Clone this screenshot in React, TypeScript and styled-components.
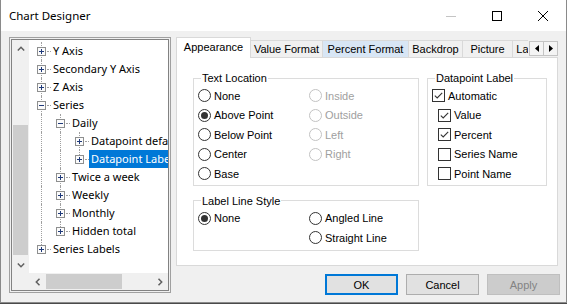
import React from "react";
import styled, { createGlobalStyle, css } from "styled-components";

const GlobalStyle = createGlobalStyle`
  html, body { margin: 0; padding: 0; background: #4a4a4a; }
  body { width: 567px; height: 304px; overflow: hidden; }
  * { box-sizing: border-box; }
`;

const Window = styled.div`
  width: 567px;
  height: 303px;
  display: flex;
  flex-direction: column;
  background: #f0f0f0;
  border: 1px solid #8a8a8a;
  border-top: none;
  font-family: "Liberation Sans", Arial, sans-serif;
  font-size: 11px;
  color: #000;
`;

const TitleBar = styled.div`
  height: 31px;
  flex: none;
  display: flex;
  background: #fff;
`;

const TitleText = styled.div`
  flex: 1;
  display: flex;
  align-items: center;
  padding-left: 8px;
  font-family: "Noto Sans", sans-serif;
  font-size: 11.5px;
`;

const CaptionButton = styled.div`
  width: 46px;
  display: flex;
  align-items: center;
  justify-content: center;
`;

const Body = styled.div`
  display: flex;
  gap: 5px;
  padding: 6px 0 0 8px;
`;

/* ---------- Tree ---------- */
const TreeFrame = styled.div`
  width: 162px;
  height: 256px;
  flex: none;
  border: 1px solid #a0a0a0;
  padding: 1px;
  background: #f0f0f0;
`;

const TreeInner = styled.div`
  height: 100%;
  border: 1px solid #828282;
  display: grid;
  grid-template-columns: 17px 1fr;
  grid-template-rows: 1fr 17px;
  background: #f0f0f0;
  min-height: 0;
`;

const VScroll = styled.div`
  display: flex;
  flex-direction: column;
  background: #f0f0f0;
  min-height: 0;
`;

const HScroll = styled.div`
  display: flex;
  background: #f0f0f0;
  min-width: 0;
`;

const ScrollArrow = styled.div`
  width: 17px;
  height: 17px;
  flex: none;
  display: flex;
  align-items: center;
  justify-content: center;
`;

const VTrack = styled.div<{ $offset: number }>`
  flex: 1;
  padding-top: ${(p) => p.$offset}px;
`;

const VThumb = styled.div<{ $size: number }>`
  height: ${(p) => p.$size}px;
  margin: 0 1px;
  background: #cdcdcd;
`;

const HTrack = styled.div<{ $offset: number }>`
  flex: 1;
  padding-left: ${(p) => p.$offset}px;
  display: flex;
`;

const HThumb = styled.div<{ $size: number }>`
  width: ${(p) => p.$size}px;
  margin: 1px 0;
  background: #cdcdcd;
`;

const Corner = styled.div`
  background: #f0f0f0;
`;

const TreeContent = styled.div`
  background: #fff;
  overflow: hidden;
  padding: 2px 0 0 3px;
  font-family: "Noto Sans", sans-serif;
  font-size: 11px;
`;

const TreeRowEl = styled.div`
  display: flex;
  height: 18px;
  white-space: nowrap;
`;

const Guide = styled.div<{ $on: boolean }>`
  width: 19px;
  flex: none;
  position: relative;
  ${(p) =>
    p.$on &&
    css`
      &::before {
        content: "";
        position: absolute;
        left: 9px;
        top: 0;
        bottom: 0;
        border-left: 1px dotted #a0a0a0;
      }
    `}
`;

const Connector = styled.div<{ $last: boolean }>`
  width: 19px;
  flex: none;
  position: relative;
  &::before {
    content: "";
    position: absolute;
    left: 9px;
    top: 0;
    height: ${(p) => (p.$last ? "9px" : "100%")};
    border-left: 1px dotted #a0a0a0;
  }
  &::after {
    content: "";
    position: absolute;
    left: 15px;
    right: 0;
    top: 9px;
    border-top: 1px dotted #a0a0a0;
  }
`;

const ExpanderIcon = styled.svg`
  position: absolute;
  left: 5px;
  top: 5px;
  z-index: 1;
`;

const NodeLabel = styled.span<{ $selected?: boolean }>`
  flex: none;
  padding: 0 2px;
  height: 18px;
  line-height: 18px;
  background: ${(p) => (p.$selected ? "#0078d7" : "transparent")};
  color: ${(p) => (p.$selected ? "#fff" : "#000")};
`;

type Node = {
  label: string;
  guides: boolean[];
  expanded?: boolean;
  last?: boolean;
  selected?: boolean;
};

const nodes: Node[] = [
  { label: "Y Axis", guides: [] },
  { label: "Secondary Y Axis", guides: [] },
  { label: "Z Axis", guides: [] },
  { label: "Series", guides: [], expanded: true },
  { label: "Daily", guides: [true], expanded: true },
  { label: "Datapoint defaults", guides: [true, true] },
  { label: "Datapoint Labels", guides: [true, true], last: true, selected: true },
  { label: "Twice a week", guides: [true] },
  { label: "Weekly", guides: [true] },
  { label: "Monthly", guides: [true] },
  { label: "Hidden total", guides: [true], last: true },
  { label: "Series Labels", guides: [], last: true },
];

const Expander = ({ expanded }: { expanded?: boolean }) => (
  <ExpanderIcon width="9" height="9" viewBox="0 0 9 9">
    <rect x="0.5" y="0.5" width="8" height="8" fill="#fbfbfb" stroke="#8e8f8f" />
    <line x1="2" y1="4.5" x2="7" y2="4.5" stroke="#1f3a7a" />
    {!expanded && <line x1="4.5" y1="2" x2="4.5" y2="7" stroke="#1f3a7a" />}
  </ExpanderIcon>
);

const TreeRow = ({ node }: { node: Node }) => (
  <TreeRowEl>
    {node.guides.map((g, i) => (
      <Guide key={i} $on={g} />
    ))}
    <Connector $last={!!node.last}>
      <Expander expanded={node.expanded} />
    </Connector>
    <NodeLabel $selected={node.selected}>{node.label}</NodeLabel>
  </TreeRowEl>
);

const Chevron = ({ dir }: { dir: "up" | "down" | "left" | "right" }) => {
  const pts = {
    up: "0.8,4.5 4,1.3 7.2,4.5",
    down: "0.8,1.5 4,4.7 7.2,1.5",
    left: "4.5,0.8 1.3,4 4.5,7.2",
    right: "1.5,0.8 4.7,4 1.5,7.2",
  }[dir];
  const horiz = dir === "up" || dir === "down";
  return (
    <svg width={horiz ? 8 : 6} height={horiz ? 6 : 8} viewBox={horiz ? "0 0 8 6" : "0 0 6 8"}>
      <polyline points={pts} fill="none" stroke="#606060" strokeWidth="1.5" />
    </svg>
  );
};

/* ---------- Tabs ---------- */
const RightColumn = styled.div`
  width: 384px;
  display: flex;
  flex-direction: column;
`;

const TabStrip = styled.div`
  width: 382px;
  height: 20px;
  display: flex;
  position: relative;
  z-index: 1;
`;

const TabViewport = styled.div`
  width: 352px;
  height: 21px;
  overflow: hidden;
  display: flex;
  align-items: flex-start;
  flex: none;
`;

const Tab = styled.div<{ $width: number; $active?: boolean; $hover?: boolean }>`
  flex: none;
  width: ${(p) => p.$width}px;
  height: 17px;
  margin-top: 3px;
  border-top: 1px solid #d9d9d9;
  border-right: 1px solid #d9d9d9;
  background: ${(p) => (p.$hover ? "#d8e6f5" : "#f0f0f0")};
  display: flex;
  align-items: center;
  justify-content: center;
  white-space: nowrap;
  overflow: hidden;
  ${(p) =>
    p.$active &&
    css`
      height: 21px;
      margin-top: 0;
      border-left: 1px solid #d9d9d9;
      background: #fff;
      padding-bottom: 2px;
    `}
`;

const TabScrollButtons = styled.div`
  display: flex;
  margin: 4px 0 0 1px;
`;

const TabScrollButton = styled.div`
  width: 15px;
  height: 15px;
  border: 1px solid #c4c4c4;
  background: #f4f4f4;
  display: flex;
  align-items: center;
  justify-content: center;
  & + & {
    margin-left: -1px;
  }
`;

const Panel = styled.div`
  width: 382px;
  height: 209px;
  background: #fff;
  border: 1px solid #d9d9d9;
  padding: 13px 0 0 16px;
  display: grid;
  grid-template-columns: 226px 120px;
  column-gap: 8px;
  row-gap: 8px;
  align-content: start;
  align-items: start;
`;

const Group = styled.fieldset<{ $padBottom: number }>`
  margin: 0;
  padding: 1px 0 ${(p) => p.$padBottom}px 4px;
  border: 1px solid #dcdcdc;
  min-width: 0;
`;

const GroupTitle = styled.legend`
  margin-left: 3px;
  padding: 0 1px;
  line-height: 14px;
  height: 14px;
`;

const OptionGrid = styled.div`
  display: grid;
  grid-template-columns: 111px 1fr;
`;

const Option = styled.label<{ $disabled?: boolean; $indent?: number }>`
  display: flex;
  align-items: center;
  gap: 3px;
  height: 19.5px;
  padding-left: ${(p) => p.$indent ?? 0}px;
  white-space: nowrap;
  color: ${(p) => (p.$disabled ? "#a0a0a0" : "#000")};
`;

const Empty = styled.div`
  height: 19.5px;
`;

const Radio = ({ checked, disabled }: { checked?: boolean; disabled?: boolean }) => (
  <svg width="13" height="13" viewBox="0 0 13 13">
    <circle cx="6.5" cy="6.5" r="6" fill="#fff" stroke={disabled ? "#c2c2c2" : "#333"} />
    {checked && <circle cx="6.5" cy="6.5" r="3.5" fill="#333" />}
  </svg>
);

const Check = ({ checked }: { checked?: boolean }) => (
  <svg width="13" height="13" viewBox="0 0 13 13">
    <rect x="0.5" y="0.5" width="12" height="12" fill="#fff" stroke="#333" />
    {checked && (
      <polyline points="2.8,6.6 5.2,9 10.2,3.8" fill="none" stroke="#333" strokeWidth="1.1" />
    )}
  </svg>
);

const RadioOption = ({ label, checked, disabled }: { label: string; checked?: boolean; disabled?: boolean }) => (
  <Option $disabled={disabled}>
    <Radio checked={checked} disabled={disabled} />
    {label}
  </Option>
);

const CheckOption = ({ label, checked, indent }: { label: string; checked?: boolean; indent?: number }) => (
  <Option $indent={indent}>
    <Check checked={checked} />
    {label}
  </Option>
);

const ButtonRow = styled.div`
  display: flex;
  justify-content: flex-end;
  gap: 8px;
  margin-top: 8px;
`;

const DialogButton = styled.button<{ $default?: boolean }>`
  width: 73px;
  height: 21px;
  padding: 0;
  font-family: "Liberation Sans", Arial, sans-serif;
  font-size: 11px;
  color: #000;
  background: #e1e1e1;
  border: 1px solid #adadad;
  ${(p) =>
    p.$default &&
    css`
      border: 2px solid #0078d7;
    `}
  &:disabled {
    background: #cccccc;
    border-color: #bfbfbf;
    color: #838383;
  }
`;

export default function App() {
  return (
    <>
      <GlobalStyle />
      <Window>
        <TitleBar>
          <TitleText>Chart Designer</TitleText>
          <CaptionButton>
            <svg width="10" height="10" viewBox="0 0 10 10">
              <line x1="0" y1="5.5" x2="10" y2="5.5" stroke="#c4c4c4" />
            </svg>
          </CaptionButton>
          <CaptionButton>
            <svg width="10" height="10" viewBox="0 0 10 10">
              <rect x="0.5" y="0.5" width="9" height="9" fill="none" stroke="#000" />
            </svg>
          </CaptionButton>
          <CaptionButton>
            <svg width="10" height="10" viewBox="0 0 10 10">
              <path d="M0 0 L10 10 M10 0 L0 10" stroke="#000" strokeWidth="1" />
            </svg>
          </CaptionButton>
        </TitleBar>
        <Body>
          <TreeFrame>
            <TreeInner>
              <VScroll>
                <ScrollArrow>
                  <Chevron dir="up" />
                </ScrollArrow>
                <VTrack $offset={68}>
                  <VThumb $size={130} />
                </VTrack>
                <ScrollArrow>
                  <Chevron dir="down" />
                </ScrollArrow>
              </VScroll>
              <TreeContent>
                {nodes.map((n) => (
                  <TreeRow key={n.label} node={n} />
                ))}
              </TreeContent>
              <Corner />
              <HScroll>
                <ScrollArrow>
                  <Chevron dir="left" />
                </ScrollArrow>
                <HTrack $offset={0}>
                  <HThumb $size={76} />
                </HTrack>
                <ScrollArrow>
                  <Chevron dir="right" />
                </ScrollArrow>
              </HScroll>
            </TreeInner>
          </TreeFrame>
          <RightColumn>
            <TabStrip>
              <TabViewport>
                <Tab $width={75} $active>
                  Appearance
                </Tab>
                <Tab $width={72}>Value Format</Tab>
                <Tab $width={86} $hover>
                  Percent Format
                </Tab>
                <Tab $width={54}>Backdrop</Tab>
                <Tab $width={50}>Picture</Tab>
                <Tab $width={40}>Labels</Tab>
              </TabViewport>
              <TabScrollButtons>
                <TabScrollButton>
                  <svg width="4" height="7" viewBox="0 0 4 7">
                    <polygon points="4,0 0,3.5 4,7" fill="#000" />
                  </svg>
                </TabScrollButton>
                <TabScrollButton>
                  <svg width="4" height="7" viewBox="0 0 4 7">
                    <polygon points="0,0 4,3.5 0,7" fill="#000" />
                  </svg>
                </TabScrollButton>
              </TabScrollButtons>
            </TabStrip>
            <Panel>
              <Group $padBottom={1}>
                <GroupTitle>Text Location</GroupTitle>
                <OptionGrid>
                  <RadioOption label="None" />
                  <RadioOption label="Inside" disabled />
                  <RadioOption label="Above Point" checked />
                  <RadioOption label="Outside" disabled />
                  <RadioOption label="Below Point" />
                  <RadioOption label="Left" disabled />
                  <RadioOption label="Center" />
                  <RadioOption label="Right" disabled />
                  <RadioOption label="Base" />
                </OptionGrid>
              </Group>
              <Group $padBottom={1}>
                <GroupTitle>Datapoint Label</GroupTitle>
                <CheckOption label="Automatic" checked />
                <CheckOption label="Value" checked indent={6} />
                <CheckOption label="Percent" checked indent={6} />
                <CheckOption label="Series Name" indent={6} />
                <CheckOption label="Point Name" indent={6} />
              </Group>
              <Group $padBottom={2.5}>
                <GroupTitle>Label Line Style</GroupTitle>
                <OptionGrid>
                  <RadioOption label="None" checked />
                  <RadioOption label="Angled Line" />
                  <Empty />
                  <RadioOption label="Straight Line" />
                </OptionGrid>
              </Group>
            </Panel>
            <ButtonRow>
              <DialogButton $default>OK</DialogButton>
              <DialogButton>Cancel</DialogButton>
              <DialogButton disabled>Apply</DialogButton>
            </ButtonRow>
          </RightColumn>
        </Body>
      </Window>
    </>
  );
}
